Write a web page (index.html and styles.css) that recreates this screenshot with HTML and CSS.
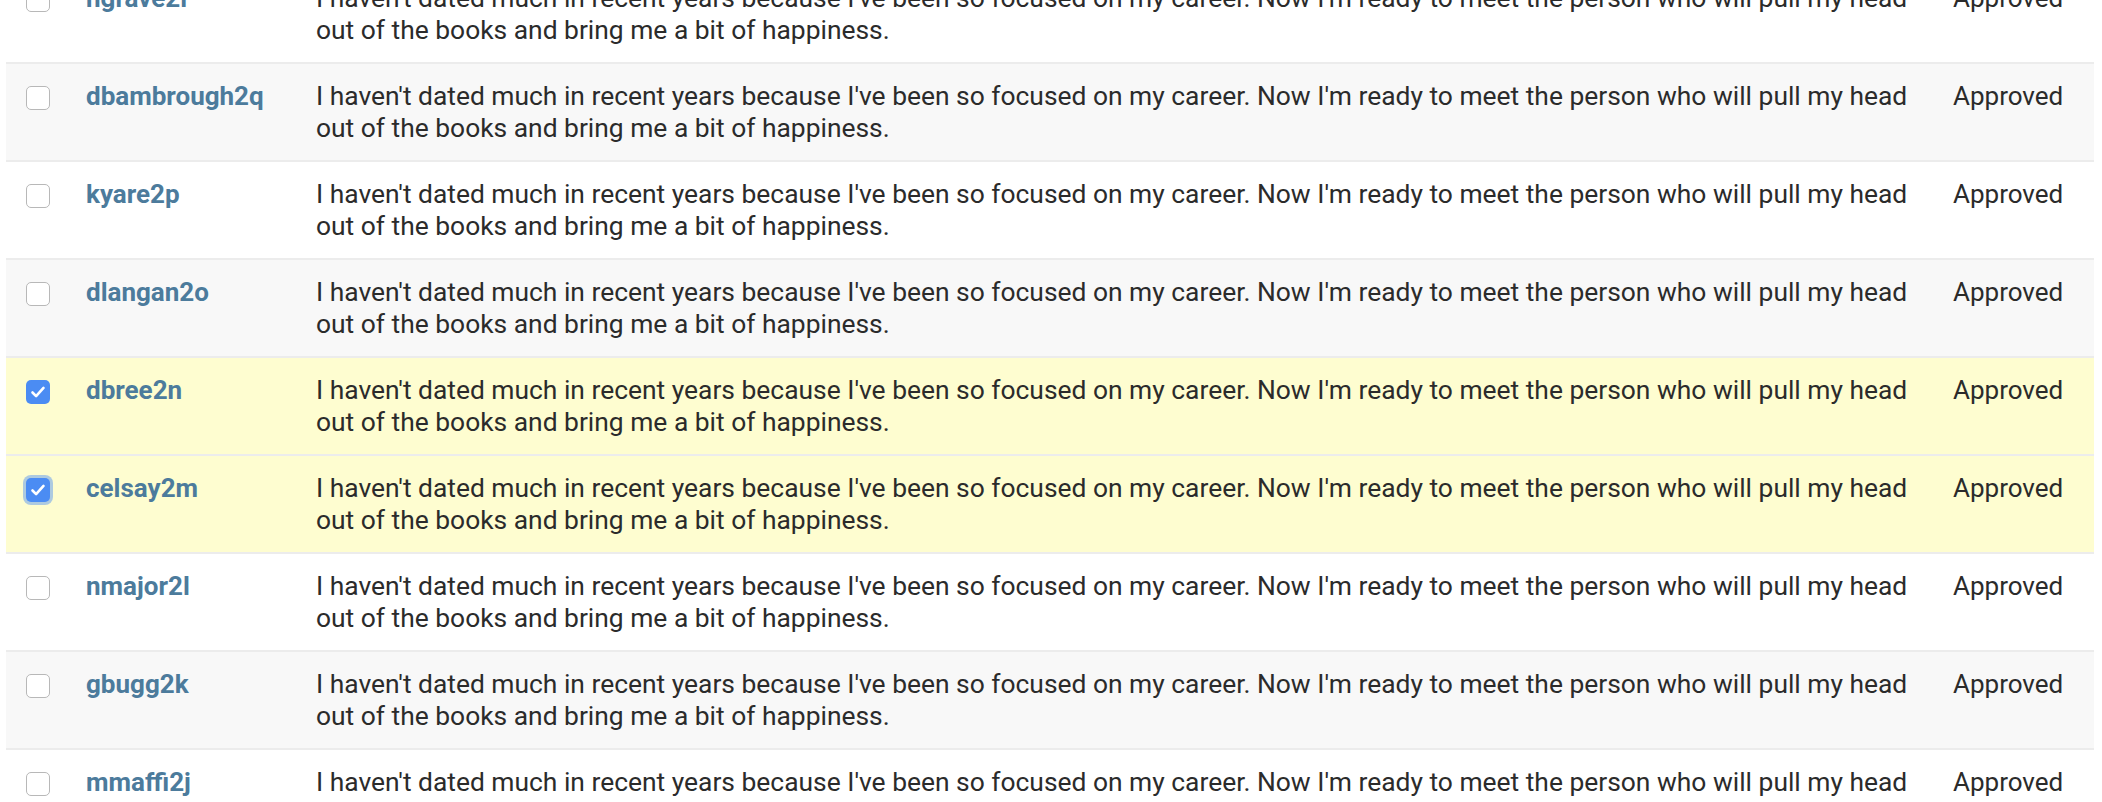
FILE: index.html
```html
<!DOCTYPE html>
<html>
<head>
<meta charset="utf-8">
<link rel="stylesheet" href="styles.css">
</head>
<body>
<table class="list">
  <colgroup>
    <col class="c-check"><col class="c-user"><col class="c-desc"><col class="c-status">
  </colgroup>
  <tbody>
    <tr>
      <td class="cell-check"><span class="box"></span></td>
      <td class="cell-user"><a class="user">ngrave2l</a></td>
      <td class="cell-desc">I haven't dated much in recent years because I've been so focused on my career. Now I'm ready to meet the person who will pull my head out of the books and bring me a bit of happiness.</td>
      <td class="cell-status">Approved</td>
    </tr>
    <tr>
      <td class="cell-check"><span class="box"></span></td>
      <td class="cell-user"><a class="user">dbambrough2q</a></td>
      <td class="cell-desc">I haven't dated much in recent years because I've been so focused on my career. Now I'm ready to meet the person who will pull my head out of the books and bring me a bit of happiness.</td>
      <td class="cell-status">Approved</td>
    </tr>
    <tr>
      <td class="cell-check"><span class="box"></span></td>
      <td class="cell-user"><a class="user">kyare2p</a></td>
      <td class="cell-desc">I haven't dated much in recent years because I've been so focused on my career. Now I'm ready to meet the person who will pull my head out of the books and bring me a bit of happiness.</td>
      <td class="cell-status">Approved</td>
    </tr>
    <tr>
      <td class="cell-check"><span class="box"></span></td>
      <td class="cell-user"><a class="user">dlangan2o</a></td>
      <td class="cell-desc">I haven't dated much in recent years because I've been so focused on my career. Now I'm ready to meet the person who will pull my head out of the books and bring me a bit of happiness.</td>
      <td class="cell-status">Approved</td>
    </tr>
    <tr class="selected">
      <td class="cell-check"><span class="box checked"><svg viewBox="0 0 24 24" width="24" height="24"><path d="M6.5 12.5l3.6 3.6 7.4-8.2" fill="none" stroke="#fff" stroke-width="2.6" stroke-linecap="round" stroke-linejoin="round"/></svg></span></td>
      <td class="cell-user"><a class="user">dbree2n</a></td>
      <td class="cell-desc">I haven't dated much in recent years because I've been so focused on my career. Now I'm ready to meet the person who will pull my head out of the books and bring me a bit of happiness.</td>
      <td class="cell-status">Approved</td>
    </tr>
    <tr class="selected">
      <td class="cell-check"><span class="box checked focused"><svg viewBox="0 0 24 24" width="24" height="24"><path d="M6.5 12.5l3.6 3.6 7.4-8.2" fill="none" stroke="#fff" stroke-width="2.6" stroke-linecap="round" stroke-linejoin="round"/></svg></span></td>
      <td class="cell-user"><a class="user">celsay2m</a></td>
      <td class="cell-desc">I haven't dated much in recent years because I've been so focused on my career. Now I'm ready to meet the person who will pull my head out of the books and bring me a bit of happiness.</td>
      <td class="cell-status">Approved</td>
    </tr>
    <tr>
      <td class="cell-check"><span class="box"></span></td>
      <td class="cell-user"><a class="user">nmajor2l</a></td>
      <td class="cell-desc">I haven't dated much in recent years because I've been so focused on my career. Now I'm ready to meet the person who will pull my head out of the books and bring me a bit of happiness.</td>
      <td class="cell-status">Approved</td>
    </tr>
    <tr>
      <td class="cell-check"><span class="box"></span></td>
      <td class="cell-user"><a class="user">gbugg2k</a></td>
      <td class="cell-desc">I haven't dated much in recent years because I've been so focused on my career. Now I'm ready to meet the person who will pull my head out of the books and bring me a bit of happiness.</td>
      <td class="cell-status">Approved</td>
    </tr>
    <tr>
      <td class="cell-check"><span class="box"></span></td>
      <td class="cell-user"><a class="user">mmaffi2j</a></td>
      <td class="cell-desc">I haven't dated much in recent years because I've been so focused on my career. Now I'm ready to meet the person who will pull my head out of the books and bring me a bit of happiness.</td>
      <td class="cell-status">Approved</td>
    </tr>
  </tbody>
</table>
</body>
</html>
```

FILE: styles.css
```css
html, body {
  margin: 0;
  padding: 0;
  background: #fff;
  overflow: hidden;
}
body {
  font-family: Roboto, "Liberation Sans", sans-serif;
  font-size: 26px;
  line-height: 32px;
  color: #2b2b2b;
}
.list {
  margin: -34px 0 0 6px;
  width: 2088px;
  border-collapse: collapse;
  table-layout: fixed;
}
.c-check { width: 60px; }
.c-user { width: 230px; }
.c-desc { width: 1637px; }
.c-status { width: 161px; }
.list tr {
  border-bottom: 2px solid #ececec;
}
.list tr:nth-child(even) { background: #f8f8f8; }
.list tr.selected { background: #fefdd0; }
.list td {
  padding: 16px 0 16px 20px;
  vertical-align: top;
}
.cell-desc {
  padding-right: 10px;
  font-size: 26.4px;
}
.cell-check { line-height: 0; }
.box {
  display: block;
  box-sizing: border-box;
  width: 24px;
  height: 24px;
  margin-top: 6px;
  border: 1.5px solid #b8b8b8;
  border-radius: 5px;
  background: #fff;
}
.box.checked {
  border: none;
  background: #4b8cf3;
}
.box.checked svg { display: block; }
.box.focused {
  box-shadow: 0 0 0 3px rgba(75, 140, 243, 0.45);
}
.user {
  font-weight: 700;
  color: #4c7b9c;
  text-decoration: none;
}
```
